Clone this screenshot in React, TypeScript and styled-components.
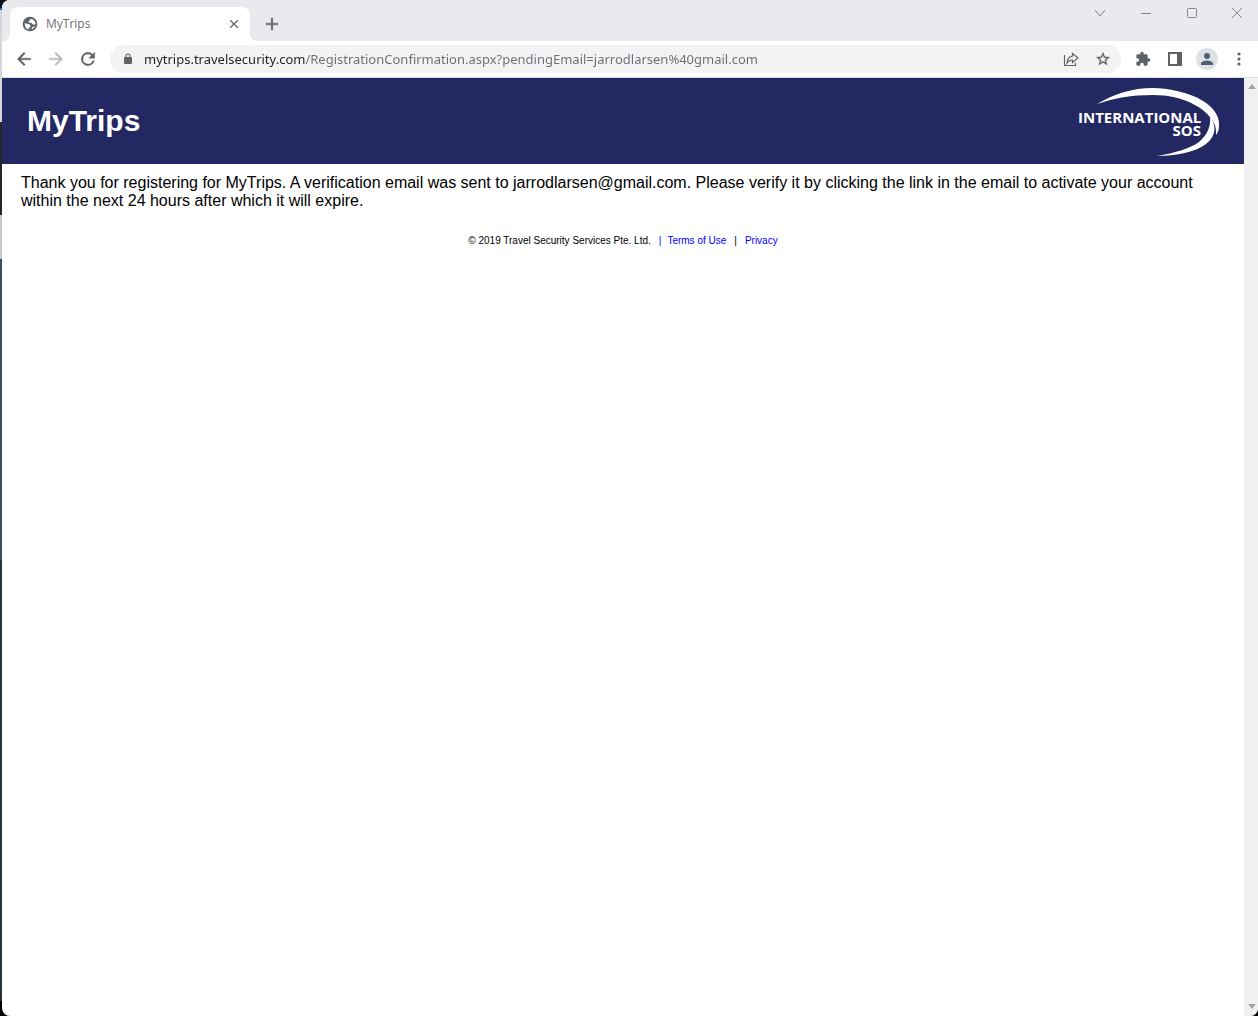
import React from "react";
import styled, { createGlobalStyle } from "styled-components";

const GlobalStyle = createGlobalStyle`
  * { box-sizing: border-box; }
  body { margin: 0; background: #000; }
  button { border: 0; padding: 0; background: none; font: inherit; cursor: pointer; }
`;

const Desktop = styled.div`
  min-height: 100vh;
  display: flex;
  padding-left: 2px;
  background: linear-gradient(#101418 0 8px, #1c6fc0 8px 10px, #d4d6d8 10px 122px, #23282e 122px 215px, #c8c8cc 215px 259px, #3d4c5c 259px 560px, #27303b 560px 1001px, #000 1001px);
`;

const BrowserWindow = styled.div`
  flex: 1;
  min-width: 0;
  display: flex;
  flex-direction: column;
  border-radius: 8px 0 8px 8px;
  overflow: hidden;
  background: #fff;
`;

const TabStrip = styled.div`
  display: flex;
  justify-content: space-between;
  height: 41px;
  padding-left: 8px;
  background: #e8eaed;
`;

const TabGroup = styled.div`
  display: flex;
  align-items: flex-end;
`;

const Tab = styled.div`
  position: relative;
  display: flex;
  align-items: center;
  width: 240px;
  height: 34px;
  padding: 0 8px 0 12px;
  border-radius: 8px 8px 0 0;
  background: #fff;
  color: #5f6368;

  &::before,
  &::after {
    content: "";
    position: absolute;
    bottom: 0;
    width: 8px;
    height: 8px;
  }
  &::before {
    right: 100%;
    background: radial-gradient(circle at 0 0, transparent 8px, #fff 8px);
  }
  &::after {
    left: 100%;
    background: radial-gradient(circle at 100% 0, transparent 8px, #fff 8px);
  }
`;

const TabTitle = styled.span`
  flex: 1;
  padding-left: 8px;
  color: #6b6e72;
  font: 12px/16px "Open Sans", "Noto Sans", sans-serif;
`;

const IconButton = styled.button<{ $size: number; $color?: string }>`
  display: flex;
  align-items: center;
  justify-content: center;
  flex: none;
  width: ${(p) => p.$size}px;
  height: ${(p) => p.$size}px;
  color: ${(p) => p.$color ?? "#5f6368"};
`;

const NewTab = styled(IconButton)`
  height: 34px;
  margin-left: 6px;
`;

const Caption = styled.div`
  display: flex;
`;

const CaptionButton = styled.button`
  display: flex;
  align-items: center;
  justify-content: center;
  width: 46px;
  height: 26px;
  color: #85878a;

  &:last-child { width: 43px; }
`;

const Toolbar = styled.div`
  display: flex;
  align-items: center;
  height: 37px;
  padding: 0 3px 0 6px;
  border-bottom: 1px solid #dadce0;
`;

const AddressBar = styled.form`
  flex: 1;
  min-width: 0;
  display: flex;
  align-items: center;
  height: 28px;
  margin: 0 6px;
  padding: 0 2px 0 10px;
  border-radius: 14px;
  background: #f1f3f4;
`;

const AddressInput = styled.input`
  flex: 1;
  min-width: 0;
  height: 24px;
  margin-left: 8px;
  padding: 0;
  border: 0;
  outline: 0;
  color: transparent;
  caret-color: #202124;
  font: 13px/24px "Noto Sans", "Open Sans", sans-serif;
  background: linear-gradient(90deg, #202124 161px, #6b6e72 161px);
  background-clip: text;
  -webkit-background-clip: text;
`;

const Avatar = styled.span`
  display: flex;
  align-items: center;
  justify-content: center;
  width: 22px;
  height: 22px;
  border-radius: 50%;
  background: #dee1e6;
  color: #4f5d75;
`;

const Viewport = styled.div`
  flex: 1;
  display: flex;
`;

const Page = styled.div`
  flex: 1;
  min-width: 0;
  font-family: "Liberation Sans", Arial, sans-serif;
  color: #000;
`;

const Banner = styled.header`
  display: flex;
  align-items: center;
  justify-content: space-between;
  height: 86px;
  padding: 0 24px 0 25px;
  background: #232862;
`;

const Title = styled.h1`
  margin: 0;
  color: #fff;
  font-size: 30px;
  line-height: 36px;
`;

const Message = styled.p`
  margin: 0;
  padding: 10px 40px 0 19px;
  font-size: 16px;
  line-height: 18px;
`;

const Footer = styled.footer`
  display: flex;
  justify-content: center;
  margin-top: 24px;
  font-size: 10px;
  line-height: 14px;
`;

const FooterLink = styled.a`
  color: #00f;
  text-decoration: none;
`;

const Divider = styled.span<{ $color?: string; $wide?: boolean }>`
  padding: 0 ${(p) => (p.$wide ? 8 : 6)}px 0 8px;
  color: ${(p) => p.$color ?? "#000"};
`;

const ScrollTrack = styled.div`
  display: flex;
  flex-direction: column;
  align-items: center;
  justify-content: space-between;
  width: 14px;
  padding: 6px 0 7px 2px;
  background: #f0f0f0;
`;

const Arrow = styled.svg`
  display: block;
`;

const Filled = ({ size, d, weight = 0 }: { size: number; d: string; weight?: number }) => (
  <svg width={size} height={size} viewBox="0 0 24 24" fill="currentColor" stroke="currentColor" strokeWidth={weight} aria-hidden="true">
    <path d={d} />
  </svg>
);

const GLOBE =
  "M12 1a11 11 0 1 0 0 22 11 11 0 0 0 0-22zM4 11l4 .5 3 1 2 2.5-1 2-2 1v2.5C6.5 19.5 3.8 16 4 11zm9-7c4 .5 7 3.5 7.5 7.5L19 13l-3-.5-1.5-2L11 10 9.5 8 12 6.5zM19.5 15c-1 2.5-3 4.5-5.5 5l2-3.5z";
const CLOSE = "M19 6.41 17.59 5 12 10.59 6.41 5 5 6.41 10.59 12 5 17.59 6.41 19 12 13.41 17.59 19 19 17.59 13.41 12z";
const PLUS = "M19 13h-6v6h-2v-6H5v-2h6V5h2v6h6z";
const BACK = "M20 11H7.83l5.59-5.59L12 4l-8 8 8 8 1.41-1.41L7.83 13H20z";
const FORWARD = "m12 4-1.41 1.41L16.17 11H4v2h12.17l-5.58 5.59L12 20l8-8z";
const RELOAD =
  "M17.65 6.35A7.96 7.96 0 0 0 12 4a8 8 0 1 0 7.73 10h-2.08A6 6 0 1 1 12 6c1.66 0 3.14.69 4.22 1.78L13 11h7V4z";
const LOCK =
  "M18 8h-1V6A5 5 0 0 0 7 6v2H6a2 2 0 0 0-2 2v10c0 1.1.9 2 2 2h12a2 2 0 0 0 2-2V10a2 2 0 0 0-2-2zM9 6a3 3 0 0 1 6 0v2H9z";
const STAR =
  "m22 9.24-7.19-.62L12 2 9.19 8.63 2 9.24l5.46 4.73L5.82 21 12 17.27 18.18 21l-1.63-7.03zM12 15.4l-3.76 2.27 1-4.28-3.32-2.88 4.38-.38L12 6.1l1.71 4.04 4.38.38-3.32 2.88 1 4.28z";
const PUZZLE =
  "M20.5 11H19V7a2 2 0 0 0-2-2h-4V3.5a2.5 2.5 0 0 0-5 0V5H4a2 2 0 0 0-2 2v3.8h1.5a2.7 2.7 0 0 1 0 5.4H2V20c0 1.1.9 2 2 2h3.8v-1.5a2.7 2.7 0 0 1 5.4 0V22H17a2 2 0 0 0 2-2v-4h1.5a2.5 2.5 0 0 0 0-5z";
const PERSON = "M12 12a4 4 0 1 0 0-8 4 4 0 0 0 0 8zm0 2c-2.67 0-8 1.34-8 4v2h16v-2c0-2.66-5.33-4-8-4z";

const Logo = () => (
  <svg width="142" height="70" viewBox="0 0 142 70" role="img" aria-label="International SOS">
    <g fill="#fff">
      <path d="M19 18C36 8 54 2 75 2 89 2 111 6 125 15 137 22 142 32 141 40 141 44 140 46 138 49 138 44 138 41 136 37 128 22 106 9 75 9 53 9 37 12 19 18Z" />
      <path d="M132 30C139 40 138 50 128 58 118 66 98 70 79 70 97 67 113 62 121 56 130 48 133 40 132 30Z" />
      <text x="0" y="37" fontFamily="'Open Sans', 'Noto Sans', sans-serif" fontSize="15" fontWeight="700">INTERNATIONAL</text>
      <text x="123" y="50" textAnchor="end" fontFamily="'Open Sans', 'Noto Sans', sans-serif" fontSize="15" fontWeight="700">SOS</text>
    </g>
  </svg>
);

export default function App() {
  return (
    <>
      <GlobalStyle />
      <Desktop>
        <BrowserWindow>
          <TabStrip>
            <TabGroup>
              <Tab>
                <Filled size={16} d={GLOBE} />
                <TabTitle>MyTrips</TabTitle>
                <IconButton $size={16} aria-label="Close tab"><Filled size={14} d={CLOSE} weight={0.5} /></IconButton>
              </Tab>
              <NewTab $size={32} aria-label="New tab"><Filled size={20} d={PLUS} weight={0.5} /></NewTab>
            </TabGroup>
            <Caption>
              <CaptionButton aria-label="Search tabs">
                <svg width="12" height="12" fill="none" stroke="currentColor"><path d="m1 3 5 6 5-6" /></svg>
              </CaptionButton>
              <CaptionButton aria-label="Minimize">
                <svg width="12" height="12" fill="none" stroke="currentColor"><path d="M1 6.5h10" /></svg>
              </CaptionButton>
              <CaptionButton aria-label="Maximize">
                <svg width="12" height="12" fill="none" stroke="currentColor"><rect x="1.5" y="1.5" width="9" height="9" rx="1" /></svg>
              </CaptionButton>
              <CaptionButton aria-label="Close">
                <svg width="12" height="12" fill="none" stroke="currentColor"><path d="m1 1 10 10M11 1 1 11" /></svg>
              </CaptionButton>
            </Caption>
          </TabStrip>
          <Toolbar>
            <IconButton $size={32} aria-label="Back"><Filled size={20} d={BACK} weight={0.5} /></IconButton>
            <IconButton $size={32} $color="#bababc" aria-label="Forward"><Filled size={20} d={FORWARD} weight={0.5} /></IconButton>
            <IconButton $size={32} aria-label="Reload"><Filled size={20} d={RELOAD} weight={0.5} /></IconButton>
            <AddressBar onSubmit={(e) => e.preventDefault()}>
              <IconButton $size={16} type="button" aria-label="View site information"><Filled size={12} d={LOCK} /></IconButton>
              <AddressInput
                aria-label="Address"
                spellCheck={false}
                defaultValue="mytrips.travelsecurity.com/RegistrationConfirmation.aspx?pendingEmail=jarrodlarsen%40gmail.com"
              />
              <IconButton $size={32} type="button" aria-label="Share this page">
                <svg width="16" height="16" fill="none" stroke="currentColor" strokeWidth="1.2">
                  <path d="M1.5 4v10.5h11V12" />
                  <path d="M9.5 2.5 15 7l-5.5 4.500V9C7 9 5.500 9.800 4 12c.3-4 2.500-6.500 5.500-7z" />
                </svg>
              </IconButton>
              <IconButton $size={32} type="button" aria-label="Bookmark this tab"><Filled size={16} d={STAR} weight={0.5} /></IconButton>
            </AddressBar>
            <IconButton $size={32} aria-label="Extensions"><Filled size={16} d={PUZZLE} /></IconButton>
            <IconButton $size={32} aria-label="Side panel">
              <svg width="14" height="14" fill="currentColor"><path d="M0 0h14v14H0zM2 2v10h7V2z" fillRule="evenodd" /></svg>
            </IconButton>
            <IconButton $size={32} aria-label="Profile"><Avatar><Filled size={18} d={PERSON} /></Avatar></IconButton>
            <IconButton $size={32} aria-label="Menu">
              <svg width="4" height="14" fill="currentColor"><circle cx="2" cy="2" r="1.6" /><circle cx="2" cy="7" r="1.6" /><circle cx="2" cy="12" r="1.6" /></svg>
            </IconButton>
          </Toolbar>
          <Viewport>
            <Page>
              <Banner>
                <Title>MyTrips</Title>
                <Logo />
              </Banner>
              <main>
                <Message>
                  Thank you for registering for MyTrips. A verification email was sent to jarrodlarsen@gmail.com. Please
                  verify it by clicking the link in the email to activate your account within the next 24 hours after
                  which it will expire.
                </Message>
              </main>
              <Footer>
                <span>© 2019 Travel Security Services Pte. Ltd.</span>
                <Divider $color="#00f">|</Divider>
                <FooterLink href="#terms">Terms of Use</FooterLink>
                <Divider $wide>|</Divider>
                <FooterLink href="#privacy">Privacy</FooterLink>
              </Footer>
            </Page>
            <ScrollTrack>
              <Arrow width="8" height="5" fill="#a3a3a3"><path d="m0 5 4-5 4 5z" /></Arrow>
              <Arrow width="8" height="5" fill="#a3a3a3"><path d="m0 0 4 5 4-5z" /></Arrow>
            </ScrollTrack>
          </Viewport>
        </BrowserWindow>
      </Desktop>
    </>
  );
}
